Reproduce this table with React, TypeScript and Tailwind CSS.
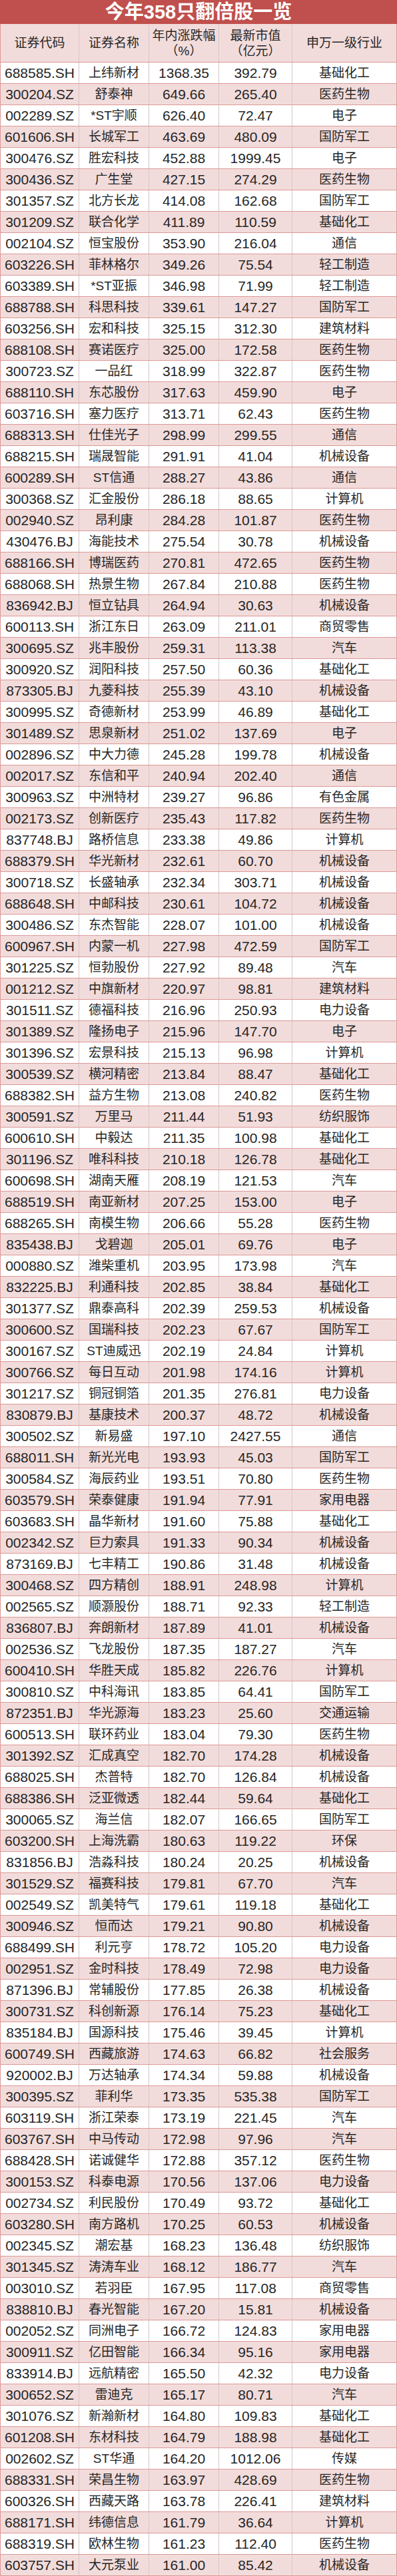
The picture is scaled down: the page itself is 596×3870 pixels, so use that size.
const raw = `688585.SH 上纬新材 1368.35 392.79 基础化工
300204.SZ 舒泰神 649.66 265.40 医药生物
002289.SZ *ST宇顺 626.40 72.47 电子
601606.SH 长城军工 463.69 480.09 国防军工
300476.SZ 胜宏科技 452.88 1999.45 电子
300436.SZ 广生堂 427.15 274.29 医药生物
301357.SZ 北方长龙 414.08 162.68 国防军工
301209.SZ 联合化学 411.89 110.59 基础化工
002104.SZ 恒宝股份 353.90 216.04 通信
603226.SH 菲林格尔 349.26 75.54 轻工制造
603389.SH *ST亚振 346.98 71.99 轻工制造
688788.SH 科思科技 339.61 147.27 国防军工
603256.SH 宏和科技 325.15 312.30 建筑材料
688108.SH 赛诺医疗 325.00 172.58 医药生物
300723.SZ 一品红 318.99 322.87 医药生物
688110.SH 东芯股份 317.63 459.90 电子
603716.SH 塞力医疗 313.71 62.43 医药生物
688313.SH 仕佳光子 298.99 299.55 通信
688215.SH 瑞晟智能 291.91 41.04 机械设备
600289.SH ST信通 288.27 43.86 通信
300368.SZ 汇金股份 286.18 88.65 计算机
002940.SZ 昂利康 284.28 101.87 医药生物
430476.BJ 海能技术 275.54 30.78 机械设备
688166.SH 博瑞医药 270.81 472.65 医药生物
688068.SH 热景生物 267.84 210.88 医药生物
836942.BJ 恒立钻具 264.94 30.63 机械设备
600113.SH 浙江东日 263.09 211.01 商贸零售
300695.SZ 兆丰股份 259.31 113.38 汽车
300920.SZ 润阳科技 257.50 60.36 基础化工
873305.BJ 九菱科技 255.39 43.10 机械设备
300995.SZ 奇德新材 253.99 46.89 基础化工
301489.SZ 思泉新材 251.02 137.69 电子
002896.SZ 中大力德 245.28 199.78 机械设备
002017.SZ 东信和平 240.94 202.40 通信
300963.SZ 中洲特材 239.27 96.86 有色金属
002173.SZ 创新医疗 235.43 117.82 医药生物
837748.BJ 路桥信息 233.38 49.86 计算机
688379.SH 华光新材 232.61 60.70 机械设备
300718.SZ 长盛轴承 232.34 303.71 机械设备
688648.SH 中邮科技 230.61 104.72 机械设备
300486.SZ 东杰智能 228.07 101.00 机械设备
600967.SH 内蒙一机 227.98 472.59 国防军工
301225.SZ 恒勃股份 227.92 89.48 汽车
001212.SZ 中旗新材 220.97 98.81 建筑材料
301511.SZ 德福科技 216.96 250.93 电力设备
301389.SZ 隆扬电子 215.96 147.70 电子
301396.SZ 宏景科技 215.13 96.98 计算机
300539.SZ 横河精密 213.84 88.47 基础化工
688382.SH 益方生物 213.08 240.82 医药生物
300591.SZ 万里马 211.44 51.93 纺织服饰
600610.SH 中毅达 211.35 100.98 基础化工
301196.SZ 唯科科技 210.18 126.78 基础化工
600698.SH 湖南天雁 208.19 121.53 汽车
688519.SH 南亚新材 207.25 153.00 电子
688265.SH 南模生物 206.66 55.28 医药生物
835438.BJ 戈碧迦 205.01 69.76 电子
000880.SZ 潍柴重机 203.95 173.98 汽车
832225.BJ 利通科技 202.85 38.84 基础化工
301377.SZ 鼎泰高科 202.39 259.53 机械设备
300600.SZ 国瑞科技 202.23 67.67 国防军工
300167.SZ ST迪威迅 202.19 24.84 计算机
300766.SZ 每日互动 201.98 174.16 计算机
301217.SZ 铜冠铜箔 201.35 276.81 电力设备
830879.BJ 基康技术 200.37 48.72 机械设备
300502.SZ 新易盛 197.10 2427.55 通信
688011.SH 新光光电 193.93 45.03 国防军工
300584.SZ 海辰药业 193.51 70.80 医药生物
603579.SH 荣泰健康 191.94 77.91 家用电器
603683.SH 晶华新材 191.60 75.88 基础化工
002342.SZ 巨力索具 191.33 90.34 机械设备
873169.BJ 七丰精工 190.86 31.48 机械设备
300468.SZ 四方精创 188.91 248.98 计算机
002565.SZ 顺灏股份 188.71 92.33 轻工制造
836807.BJ 奔朗新材 187.89 41.01 机械设备
002536.SZ 飞龙股份 187.35 187.27 汽车
600410.SH 华胜天成 185.82 226.76 计算机
300810.SZ 中科海讯 183.85 64.41 国防军工
872351.BJ 华光源海 183.23 25.60 交通运输
600513.SH 联环药业 183.04 79.30 医药生物
301392.SZ 汇成真空 182.70 174.28 机械设备
688025.SH 杰普特 182.70 126.84 机械设备
688386.SH 泛亚微透 182.44 59.64 基础化工
300065.SZ 海兰信 182.07 166.65 国防军工
603200.SH 上海洗霸 180.63 119.22 环保
831856.BJ 浩淼科技 180.24 20.25 机械设备
301529.SZ 福赛科技 179.81 67.70 汽车
002549.SZ 凯美特气 179.61 119.18 基础化工
300946.SZ 恒而达 179.21 90.80 机械设备
688499.SH 利元亨 178.72 105.20 电力设备
002951.SZ 金时科技 178.49 72.98 电力设备
871396.BJ 常辅股份 177.85 26.38 机械设备
300731.SZ 科创新源 176.14 75.23 基础化工
835184.BJ 国源科技 175.46 39.45 计算机
600749.SH 西藏旅游 174.63 66.82 社会服务
920002.BJ 万达轴承 174.34 59.88 机械设备
300395.SZ 菲利华 173.35 535.38 国防军工
603119.SH 浙江荣泰 173.19 221.45 汽车
603767.SH 中马传动 172.98 97.96 汽车
688428.SH 诺诚健华 172.88 357.12 医药生物
300153.SZ 科泰电源 170.56 137.06 电力设备
002734.SZ 利民股份 170.49 93.72 基础化工
603280.SH 南方路机 170.25 60.53 机械设备
002345.SZ 潮宏基 168.23 136.48 纺织服饰
301345.SZ 涛涛车业 168.12 186.77 汽车
003010.SZ 若羽臣 167.95 117.08 商贸零售
838810.BJ 春光智能 167.20 15.81 机械设备
002052.SZ 同洲电子 166.72 124.83 家用电器
300911.SZ 亿田智能 166.34 95.16 家用电器
833914.BJ 远航精密 165.50 42.32 电力设备
300652.SZ 雷迪克 165.17 80.71 汽车
301076.SZ 新瀚新材 164.80 109.83 基础化工
601208.SH 东材科技 164.79 188.98 基础化工
002602.SZ ST华通 164.20 1012.06 传媒
688331.SH 荣昌生物 163.97 428.69 医药生物
600326.SH 西藏天路 163.78 226.41 建筑材料
688171.SH 纬德信息 161.79 36.64 计算机
688319.SH 欧林生物 161.23 112.40 医药生物
603757.SH 大元泵业 161.00 85.42 机械设备`;

const rows = raw.split("\n").map((line) => line.trim().split(" "));

const grid = "grid grid-cols-[118px_105px_105px_110px_156px]";

export default function App() {
  return (
    <div
      className="w-[596px] bg-white text-[#262626]"
      style={{ fontFamily: '"Liberation Sans", "Noto Sans CJK SC", sans-serif' }}
    >
      {/* title */}
      <div className="h-[36px] bg-[#c0504d] flex items-center justify-center text-white font-bold text-[29px] leading-none">
        今年358只翻倍股一览
      </div>

      <div className="border-x border-[#dc9896]">
        {/* header */}
        <div className={`${grid} h-[58px] bg-[#f2dcdb] border-b border-[#dc9896] text-[19px] leading-[23px]`}>
          <div className="flex items-center justify-center border-r border-[#d6c6c6]">证券代码</div>
          <div className="flex items-center justify-center border-r border-[#d6c6c6]">证券名称</div>
          <div className="flex flex-col items-center justify-center border-r border-[#d6c6c6]">
            <span>年内涨跌幅</span>
            <span>（%）</span>
          </div>
          <div className="flex flex-col items-center justify-center border-r border-[#d6c6c6]">
            <span>最新市值</span>
            <span>（亿元）</span>
          </div>
          <div className="flex items-center justify-center">申万一级行业</div>
        </div>

        {/* body */}
        {rows.map(([code, name, chg, cap, ind], i) => (
          <div
            key={code + i}
            className={`${grid} h-[32px] border-b border-[#dc9896] ${i % 2 === 1 ? "bg-[#f2dcdb]" : "bg-white"}`}
          >
            <div className="flex items-center justify-center border-r border-[#d6c6c6] text-[21px] leading-none">{code}</div>
            <div className="flex items-center justify-center border-r border-[#d6c6c6] text-[19px] leading-none whitespace-nowrap">{name}</div>
            <div className="flex items-center justify-center border-r border-[#d6c6c6] text-[21px] leading-none">{chg}</div>
            <div className="flex items-center justify-center border-r border-[#d6c6c6] text-[21px] leading-none">{cap}</div>
            <div className="flex items-center justify-center text-[19px] leading-none">{ind}</div>
          </div>
        ))}
      </div>
    </div>
  );
}
